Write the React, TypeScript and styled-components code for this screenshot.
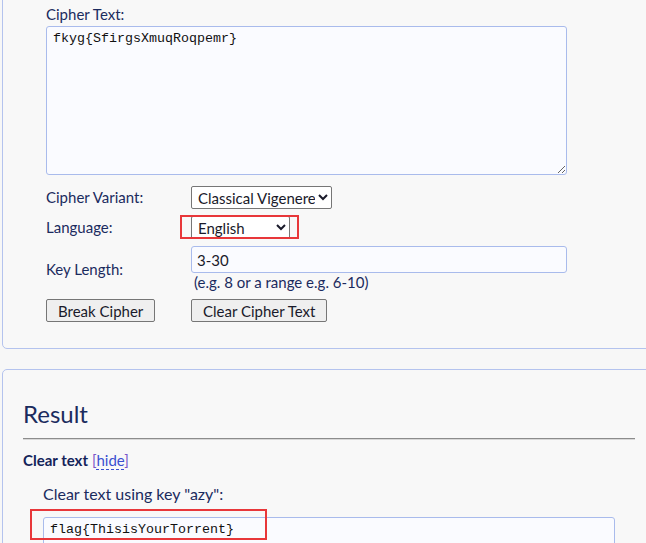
import React from "react";
import styled, { createGlobalStyle } from "styled-components";

const Global = createGlobalStyle`
  html, body {
    margin: 0;
    padding: 0;
    background: #f7f7f7;
    overflow: hidden;
  }
  body {
    font-family: Lato, "Noto Sans", sans-serif;
    color: #1b2b5e;
    font-size: 15px;
  }
`;

const Page = styled.div`
  width: 646px;
  height: 543px;
  overflow: hidden;
  padding-left: 2px;
  box-sizing: border-box;
`;

const Panel = styled.section<{ $first?: boolean }>`
  width: 660px;
  box-sizing: border-box;
  border: 1px solid #b4c3ee;
  border-radius: 5px;
  background: #f8f8f8;
  margin-top: ${(p) => (p.$first ? "-11px" : "20px")};
  padding: ${(p) => (p.$first ? "15px 0 26px 43px" : "28px 0 30px 20px")};
`;

const FormGrid = styled.div`
  display: grid;
  grid-template-columns: 145px 376px;
  row-gap: 7px;
  align-items: center;
`;

const FullLabel = styled.div`
  grid-column: 1 / span 2;
  line-height: 19px;
  margin-bottom: -5px;
`;

const CipherArea = styled.textarea`
  grid-column: 1 / span 2;
  width: 521px;
  height: 149px;
  box-sizing: border-box;
  margin: 0 0 4px;
  border: 1px solid #a9bbec;
  border-radius: 3px;
  background: #fafbff;
  font-family: "Liberation Mono", monospace;
  font-size: 13.333px;
  color: #111;
  padding: 4px 6px;
  resize: vertical;
  outline: none;
`;

const RowLabel = styled.div`
  line-height: 19px;
`;

const Control = styled.div`
  display: flex;
  flex-direction: column;
  align-items: flex-start;
`;

const SelectWrap = styled.div`
  position: relative;
  display: inline-block;
`;

const Select = styled.select<{ $w: number }>`
  width: ${(p) => p.$w}px;
  height: 23px;
  box-sizing: border-box;
  border: 1px solid #767676;
  border-radius: 2px;
  background: #fff;
  font-family: Lato, "Noto Sans", sans-serif;
  font-size: 15px;
  color: #1a1a2a;
  padding: 0 0 0 2px;
  margin: 0;
`;

const Highlight = styled.div<{ $l: number; $t: number; $w: number; $h: number }>`
  position: absolute;
  left: ${(p) => p.$l}px;
  top: ${(p) => p.$t}px;
  width: ${(p) => p.$w}px;
  height: ${(p) => p.$h}px;
  box-sizing: border-box;
  border: 2px solid #e8373a;
  pointer-events: none;
`;

const TextInput = styled.input`
  width: 376px;
  height: 27px;
  box-sizing: border-box;
  border: 1px solid #a9bbec;
  border-radius: 3px;
  background: #fafbff;
  font-family: Lato, "Noto Sans", sans-serif;
  font-size: 15px;
  color: #1a1a2a;
  padding: 0 5px;
  margin: 0;
  outline: none;
`;

const Hint = styled.div`
  line-height: 19px;
  padding-left: 3px;
  margin-top: 0;
`;

const Button = styled.button`
  height: 23px;
  box-sizing: border-box;
  border: 1px solid #767676;
  border-radius: 2px;
  background: #efefef;
  font-family: Lato, "Noto Sans", sans-serif;
  font-size: 15px;
  color: #1a1a2a;
  padding: 0 11px;
  margin: 0;
  justify-self: start;
`;

const Heading = styled.h2`
  margin: 0 0 8px;
  font-size: 24px;
  font-weight: 400;
  line-height: 32px;
  color: #1b2b5e;
`;

const Rule = styled.hr`
  width: 612px;
  margin: 0;
  border: none;
  border-top: 1px solid #8c8c8c;
  border-bottom: 1px solid #d8d8d8;
`;

const SubTitle = styled.div`
  margin-top: 10px;
  line-height: 20px;
`;

const Bold = styled.span`
  font-weight: 700;
  color: #14245a;
`;

const Bracket = styled.span`
  color: #7a56c8;
`;

const HideLink = styled.a`
  color: #3a4fd0;
  text-decoration: none;
  border-bottom: 1px dashed #3a4fd0;
`;

const ResultBlock = styled.div`
  padding-left: 20px;
  margin-top: 14px;
`;

const ResultLabel = styled.div`
  font-size: 16px;
  line-height: 20px;
`;

const ResultBoxWrap = styled.div`
  position: relative;
  margin-top: 13px;
`;

const ResultArea = styled.textarea`
  display: block;
  width: 572px;
  height: 120px;
  box-sizing: border-box;
  margin: 0;
  border: 1px solid #a9bbec;
  border-radius: 3px;
  background: #fafbff;
  font-family: "Liberation Mono", monospace;
  font-size: 13.333px;
  color: #111;
  padding: 4px 6px;
  resize: none;
  outline: none;
`;

export default function App() {
  return (
    <Page>
      <Global />
      <Panel $first>
        <FormGrid>
          <FullLabel>Cipher Text:</FullLabel>
          <CipherArea defaultValue="fkyg{SfirgsXmuqRoqpemr}" />
          <RowLabel>Cipher Variant:</RowLabel>
          <Control>
            <Select $w={141} defaultValue="classic">
              <option value="classic">Classical Vigenere</option>
            </Select>
          </Control>
          <RowLabel>Language:</RowLabel>
          <Control>
            <SelectWrap>
              <Select $w={99} defaultValue="en">
                <option value="en">English</option>
              </Select>
              <Highlight $l={-11} $t={-1} $w={119} $h={24} />
            </SelectWrap>
          </Control>
          <RowLabel>Key Length:</RowLabel>
          <Control>
            <TextInput defaultValue="3-30" />
            <Hint>(e.g. 8 or a range e.g. 6-10)</Hint>
          </Control>
          <Button>Break Cipher</Button>
          <Button>Clear Cipher Text</Button>
        </FormGrid>
      </Panel>
      <Panel>
        <Heading>Result</Heading>
        <Rule />
        <SubTitle>
          <Bold>Clear text</Bold>{" "}
          <Bracket>[</Bracket>
          <HideLink href="#">hide</HideLink>
          <Bracket>]</Bracket>
        </SubTitle>
        <ResultBlock>
          <ResultLabel>Clear text using key "azy":</ResultLabel>
          <ResultBoxWrap>
            <ResultArea defaultValue="flag{ThisisYourTorrent}" readOnly />
            <Highlight $l={-13} $t={-8} $w={237} $h={31} />
          </ResultBoxWrap>
        </ResultBlock>
      </Panel>
    </Page>
  );
}
